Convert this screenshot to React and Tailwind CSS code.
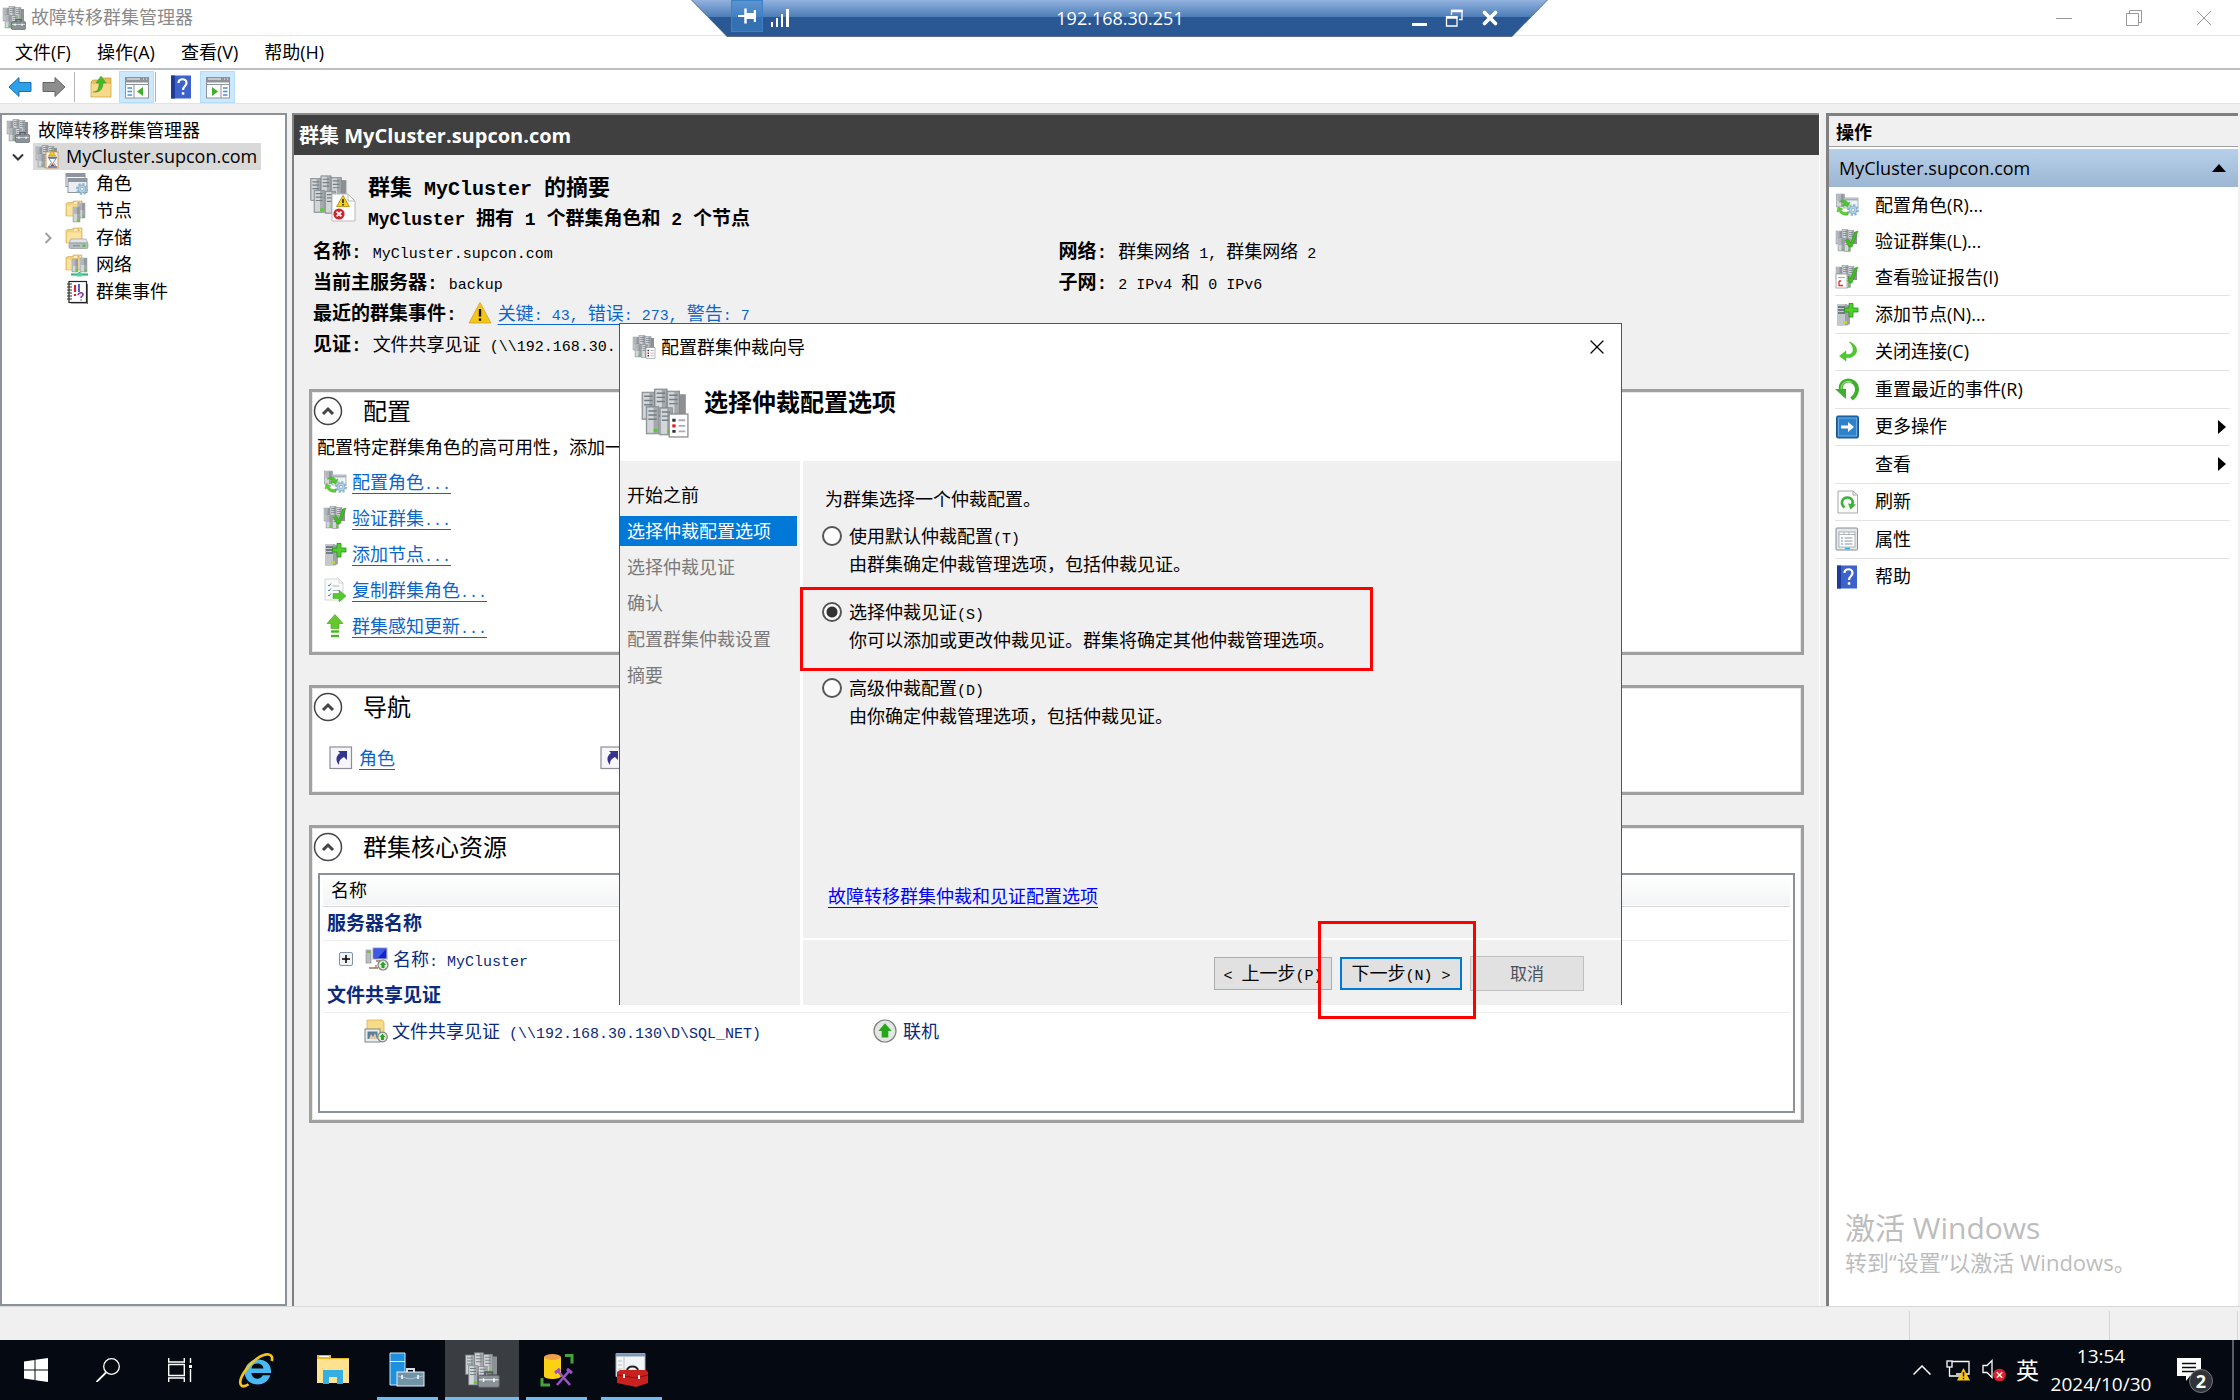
import { X } from "lucide-react";

const menus = ["文件(F)", "操作(A)", "查看(V)", "帮助(H)"];

const treeItems = [
    { label: "角色", icon: RolesIcon },
    { label: "节点", icon: NodesIcon },
    { label: "存储", icon: StorageIcon, expandable: true },
    { label: "网络", icon: NetworksIcon },
    { label: "群集事件", icon: EventsIcon },
];

const configLinks = [
    { label: "配置角色...", icon: ConfigureRoleIcon },
    { label: "验证群集...", icon: ValidateIcon },
    { label: "添加节点...", icon: AddNodeIcon },
    { label: "复制群集角色...", icon: CopyRoleIcon },
    { label: "群集感知更新...", icon: UpdateIcon },
];

const topActions = [
    { label: "配置角色(R)...", icon: ConfigureRoleIcon },
    { label: "验证群集(L)...", icon: ValidateIcon },
    { label: "查看验证报告(I)", icon: ReportIcon },
];

const actions = [
    { label: "添加节点(N)...", icon: AddNodeIcon },
    { label: "关闭连接(C)", icon: DisconnectIcon },
    { label: "重置最近的事件(R)", icon: ResetIcon },
    { label: "更多操作", icon: MoreIcon, submenu: true },
    { label: "查看", submenu: true },
    { label: "刷新", icon: RefreshIcon },
    { label: "属性", icon: PropertiesIcon },
    { label: "帮助", icon: HelpIcon },
];

const steps = ["开始之前", "选择仲裁配置选项", "选择仲裁见证", "确认", "配置群集仲裁设置", "摘要"];

const options = [
    {
        id: "default",
        label: "使用默认仲裁配置(T)",
        text: "由群集确定仲裁管理选项，包括仲裁见证。",
    },
    {
        id: "witness",
        label: "选择仲裁见证(S)",
        text: "你可以添加或更改仲裁见证。群集将确定其他仲裁管理选项。",
    },
    {
        id: "advanced",
        label: "高级仲裁配置(D)",
        text: "由你确定仲裁管理选项，包括仲裁见证。",
    },
];

/* ---------- text ---------- */

// Console style text: Latin runs are half as wide as the Chinese characters
function Song({ children, latin = "text-[15px]" }) {
    const parts = children.split(/([\x20-\x7e]+)/);
    return (
        <span className="whitespace-pre">
            {parts.map((part, i) =>
                i % 2 ? (
                    <span key={i} className={`font-['Liberation_Mono',monospace] leading-none ${latin}`}>
                        {part}
                    </span>
                ) : (
                    part
                )
            )}
        </span>
    );
}

/* ---------- icons ---------- */

function Icon({ className = "w-6 h-6", children }) {
    return (
        <svg viewBox="0 0 24 24" className={`shrink-0 ${className}`} fill="none" aria-hidden="true">
            {children}
        </svg>
    );
}

function Tower({ x, y, w = 6, h = 13 }) {
    return (
        <g>
            <rect x={x} y={y} width={w} height={h} fill="#a3a8ac" stroke="#7e8488" strokeWidth="0.4" />
            <rect x={x + 0.5} y={y + 0.5} width={w / 2} height={h - 1} fill="#d2d6d9" />
            <path
                d={`M${x + 1} ${y + 2}h${w - 2}M${x + 1} ${y + 4}h${w - 2}M${x + 1} ${y + 6}h${w - 2}`}
                stroke="#737d84"
                strokeWidth="0.7"
            />
            <rect x={x + w - 2.4} y={y + h - 2.4} width="1.8" height="1.6" fill="#4fd321" />
        </g>
    );
}

function Towers() {
    return (
        <g>
            <rect x="16" y="3" width="6" height="12" fill="#8d9194" />
            <Tower x={1} y={2} />
            <Tower x={7} y={0.5} />
            <Tower x={13} y={1.5} />
            <Tower x={3} y={9} />
            <Tower x={9.5} y={9.5} />
        </g>
    );
}

function Toolbox({ body = "#8b9297", dark = "#565d62" }) {
    return (
        <g>
            <path d="M14 16v-2.500h5V16" stroke={dark} strokeWidth="1.2" />
            <rect x="9.500" y="15.500" width="14" height="8" rx="1" fill={body} stroke={dark} strokeWidth="0.6" />
            <path d="M10 18.500h13" stroke="#dfe4e7" strokeWidth="0.8" />
            <path d="M13 17.500v2.500M20 17.500v2.500" stroke="#fff" strokeWidth="1" />
        </g>
    );
}

function ManagerIcon({ className }) {
    return (
        <Icon className={className}>
            <Towers />
            <Toolbox />
        </Icon>
    );
}

function WizardIcon({ className }) {
    return (
        <Icon className={className}>
            <Towers />
            <rect x="14" y="12.500" width="9" height="11" fill="#fff" stroke="#8a8a8a" strokeWidth="0.6" />
            <path d="M15.500 15.500h1.600M15.500 20.800h1.600" stroke="#333" strokeWidth="1.4" />
            <path d="M15.500 18.200h1.600" stroke="#e02020" strokeWidth="1.5" />
            <path d="M18.500 15.500h3.200M18.500 18.200h3.200M18.500 20.800h3.200" stroke="#aab" strokeWidth="0.9" />
        </Icon>
    );
}

function ClusterIcon() {
    return (
        <Icon className="w-6 h-7">
            <Towers />
            <rect x="11" y="7" width="12" height="16" fill="#fbf8f3" stroke="#d08a4a" strokeWidth="0.8" />
            <path d="M17 5l3.500 6h-7z" fill="#f7c81c" stroke="#9b7600" strokeWidth="0.5" />
            <path d="M13 12.500h9M13 22h9" stroke="#b5651d" strokeWidth="1.3" />
            <path d="M14 13.500h7l-2.500 4 2.500 4h-7l2.500-4z" fill="#fff" stroke="#4a78b8" strokeWidth="0.8" />
            <path d="M15.500 21l2-3 2 3z" fill="#d9302c" />
        </Icon>
    );
}

function SummaryIcon() {
    return (
        <Icon className="w-12 h-12 mt-1">
            <g transform="scale(0.85)">
                <Towers />
            </g>
            <path d="M11.500 9.500h8l3.500 3.500v10h-11.500z" fill="#fff" stroke="#b9b9b9" strokeWidth="0.5" />
            <path d="M19.500 9.500v3.500h3.500" stroke="#b9b9b9" strokeWidth="0.5" />
            <path d="M17 10.200l3.200 5.600h-6.400z" fill="#f5cf14" stroke="#a58300" strokeWidth="0.4" />
            <path d="M17 12v2M17 14.500v0.700" stroke="#222" strokeWidth="0.8" />
            <circle cx="15" cy="19.500" r="2.800" fill="#d1232a" />
            <path d="M13.800 18.300l2.400 2.400M16.200 18.300l-2.400 2.400" stroke="#fff" strokeWidth="0.9" />
        </Icon>
    );
}

function Folder() {
    return (
        <g>
            <path d="M1 4.500l2-1h5V2h9v15H1z" fill="#f3d27a" stroke="#d0a546" strokeWidth="0.6" />
            <path d="M9 4h7" stroke="#fff" strokeWidth="1.2" />
            <path d="M12.500 4h2" stroke="#e08a2c" strokeWidth="1.200" />
            <path d="M2 6.500h14v10H2z" fill="#f9e3a0" />
        </g>
    );
}

function Gear({ cx = 17, cy = 16 }) {
    return (
        <g>
            <circle cx={cx} cy={cy} r="4.800" stroke="#8fb6d3" strokeWidth="2.400" strokeDasharray="2.200 1.500" />
            <circle cx={cx} cy={cy} r="4" fill="#b7d0e2" stroke="#6f9cbd" strokeWidth="0.6" />
            <circle cx={cx} cy={cy} r="1.600" fill="#f4f9fc" stroke="#6f9cbd" strokeWidth="0.6" />
        </g>
    );
}

function RolesIcon() {
    return (
        <Icon>
            <rect x="1" y="1.500" width="19" height="13" fill="#f3f5f7" stroke="#8e979f" />
            <path d="M1 3.500h19" stroke="#8e979f" strokeWidth="3" />
            <rect x="3" y="6.500" width="19" height="14" fill="#e9eef2" stroke="#8e979f" />
            <path d="M3 8.500h19" stroke="#8e979f" strokeWidth="3" />
            <Gear cx={17} cy={17} />
        </Icon>
    );
}

function NodesIcon() {
    return (
        <Icon>
            <Folder />
            <Tower x={13} y={4} w={7} h={15} />
            <Tower x={8} y={8} w={7} h={15} />
        </Icon>
    );
}

function StorageIcon() {
    return (
        <Icon>
            <Folder />
            <path d="M6 13h15l2 4H4z" fill="#e2e5e7" stroke="#8f9497" strokeWidth="0.6" />
            <rect x="4" y="17" width="19" height="5.500" rx="1.500" fill="#b8bdc0" stroke="#858b8f" strokeWidth="0.6" />
            <path d="M8 19.800h7" stroke="#7d8488" strokeWidth="1" />
            <rect x="17.500" y="18.600" width="3" height="2.200" fill="#3ec928" />
        </Icon>
    );
}

function NetworksIcon() {
    return (
        <Icon>
            <Folder />
            <Tower x={7} y={6} w={6} h={13} />
            <Tower x={15} y={5} w={7} h={14} />
            <path d="M6 21.500h17M14.500 19v3" stroke="#2fae7a" strokeWidth="2" />
            <rect x="12" y="20" width="5" height="3.500" fill="#4fd79b" />
        </Icon>
    );
}

function EventsIcon() {
    return (
        <Icon>
            <rect x="4" y="1.500" width="17.500" height="21" fill="#fff" stroke="#222" strokeWidth="1.200" />
            <path d="M22.500 4v20H6" stroke="#444" strokeWidth="0.8" />
            <path d="M2 4h5M2 7h5M2 10h5M2 13h5M2 16h5M2 19h5" stroke="#333" strokeWidth="1" />
            <path d="M10 5v7M10 14v2" stroke="#e0201c" strokeWidth="2.200" />
            <path d="M14 4v8" stroke="#2b35c8" strokeWidth="1.600" />
            <path d="M13 15c1-3 5-3 5 0-1 2-2 1-2 3M16 19.500v1" stroke="#8a2fa8" strokeWidth="1.600" />
        </Icon>
    );
}

function ConfigureRoleIcon() {
    return (
        <Icon>
            <Tower x={1.5} y={1} w={8} h={13} />
            <rect x="9" y="5" width="14" height="10" fill="#eef2f5" stroke="#9aa3aa" strokeWidth="0.8" />
            <path d="M9 6.500h14" stroke="#a9b1b8" strokeWidth="2" />
            <Gear cx={18} cy={17} />
            <path d="M4 9c4-3 8-2 9 1l2-1-2 5-5-2 2-1c-1-2-4-2-6-2z" fill="#4dc62b" stroke="#2d9a14" strokeWidth="0.4" />
            <path d="M13 22c-4 1-8-1-9-4l-2 1 1-5 5 2-2 1c1 2 4 3 7 2z" fill="#5bd034" stroke="#2d9a14" strokeWidth="0.4" />
        </Icon>
    );
}

function ValidateIcon() {
    return (
        <Icon>
            <Towers />
            <path d="M10 11l3-1 2.500 4L20 3l3-1-6 16h-3z" fill="#3fc01f" stroke="#2a8f12" strokeWidth="0.5" />
        </Icon>
    );
}

function ReportIcon() {
    return (
        <Icon>
            <Towers />
            <path d="M13 11l2 3L20 3l3-1-6 16h-3z" fill="#3fc01f" stroke="#2a8f12" strokeWidth="0.5" />
            <rect x="1" y="9" width="11" height="14" fill="#fff" stroke="#999" strokeWidth="0.8" />
            <path d="M3 12.500h7" stroke="#aaa" />
            <path d="M4 16v4.500h4M4 16h2" stroke="#d9302c" strokeWidth="1.300" />
        </Icon>
    );
}

function AddNodeIcon() {
    return (
        <Icon>
            <path d="M2 2h9l4 2v18l-3 1.500H2z" fill="#9da3a7" />
            <path d="M2 2h8v21H2z" fill="#c3c8cb" />
            <path d="M3 5h7M3 8h7M3 11h7" stroke="#59636a" strokeWidth="1.300" />
            <rect x="8" y="19" width="4" height="2.500" fill="#b7e02a" />
            <path d="M14 1.500h4v4.500h5v4h-5v5h-4v-5H9.500V6H14z" fill="#4fcf2c" stroke="#249010" strokeWidth="0.8" />
        </Icon>
    );
}

function CopyRoleIcon() {
    return (
        <Icon>
            <path d="M2 1h14l4 4v17H2z" fill="#fafafa" stroke="#c4c9cd" strokeWidth="0.8" />
            <path d="M16 1v4h4" stroke="#c4c9cd" strokeWidth="0.8" />
            <path d="M5 7l1 1 2-2.500M5 12l1 1 2-2.500M5 17l1 1 2-2.500" stroke="#3a86c8" strokeWidth="1" />
            <path d="M9.500 8h7M9.500 12.500h7" stroke="#b0b5ba" strokeWidth="1" />
            <path d="M10 15.500h6v-3.500l7 6-7 6v-3.500h-6z" fill="#55c92f" stroke="#37a318" strokeWidth="0.5" />
        </Icon>
    );
}

function UpdateIcon() {
    return (
        <Icon>
            <path d="M12 0.500l8 9h-4v5H8v-5H4z" fill="#63c92f" stroke="#3f9c17" strokeWidth="0.6" />
            <path d="M8 17.500h8" stroke="#4fb422" strokeWidth="2.400" />
            <path d="M8 22h8" stroke="#4fb422" strokeWidth="2.400" />
        </Icon>
    );
}

function DisconnectIcon() {
    return (
        <Icon>
            <path d="M14 2c9 2 11 13 1 15.500h-4V21l-6.500-5 6.500-5v3.500h3c6-1 5-9 0-12.500z" fill="#4ccb2b" stroke="#2a9d12" strokeWidth="0.4" />
        </Icon>
    );
}

function ResetIcon() {
    return (
        <Icon>
            <path d="M6.500 14C3.500 6 12 1 18 5s5 12-1.500 17" stroke="#3fae2b" strokeWidth="4" />
            <path d="M6.500 13C5 6.500 12 2.500 17 5.500" stroke="#8be06a" strokeWidth="1.200" />
            <path d="M0 12l11 0 0 10z" fill="#3fae2b" />
        </Icon>
    );
}

function MoreIcon() {
    return (
        <Icon>
            <rect x="1.500" y="1" width="22" height="22" rx="1.500" fill="#1f6db5" stroke="#14568f" />
            <rect x="3.500" y="3" width="18" height="18" fill="#2c83cb" stroke="#7fb9e6" strokeWidth="0.8" />
            <path d="M6 10.500h7V7l6 5-6 5v-3.500H6z" fill="#fff" />
        </Icon>
    );
}

function RefreshIcon() {
    return (
        <Icon>
            <path d="M3 1h15l4.500 4v18H3z" fill="#fbfbfb" stroke="#a8a8a8" />
            <path d="M18 1v4h4.500" stroke="#a8a8a8" />
            <path d="M9.500 17.500C5 14 7 7.500 12.500 7.500c4 0 6.500 4 4.500 7.500" stroke="#3db23a" strokeWidth="2.600" />
            <path d="M13 13.500l8 1-5.500 5z" fill="#3db23a" />
        </Icon>
    );
}

function PropertiesIcon() {
    return (
        <Icon>
            <rect x="1" y="1" width="21.500" height="22" rx="1" fill="#e5e8eb" stroke="#858c92" />
            <rect x="4" y="5" width="16" height="15" fill="#fff" stroke="#9aa2a8" strokeWidth="0.8" />
            <path d="M4 7.500h16M9 5v2.500M14 5v2.500" stroke="#9aa2a8" strokeWidth="0.8" />
            <path d="M9.500 11h8M9.500 14h8M9.500 17h8" stroke="#8c949b" />
            <path d="M6 11h2M6 14h2M6 17h2" stroke="#3c98d9" />
            <path d="M10 21.500h5" stroke="#2bb4e8" strokeWidth="1.600" />
        </Icon>
    );
}

function HelpIcon() {
    return (
        <Icon>
            <rect x="2" y="0.500" width="20" height="23" fill="#3d62c9" />
            <rect x="2" y="0.500" width="4" height="23" fill="#1f3b9a" />
            <path d="M9.500 8c0-5 8-5 8 0 0 3-3.500 3.500-3.500 7" stroke="#fff" strokeWidth="2.200" />
            <rect x="12.800" y="17.200" width="2.500" height="2.500" fill="#fff" />
        </Icon>
    );
}

function ArrowIcon({ fill, stroke, flip }) {
    return (
        <Icon>
            <path
                d="M1 12L11 2.500v5h12v9H11v5z"
                fill={fill}
                stroke={stroke}
                transform={flip ? "translate(24 0) scale(-1 1)" : undefined}
            />
        </Icon>
    );
}

function UpFolderIcon() {
    return (
        <Icon>
            <path d="M2 7l2-2h9V3h9v19H2z" fill="#e9bf5c" stroke="#c59a36" strokeWidth="0.7" />
            <path d="M2.500 9h19v12.500h-19z" fill="#f6d98b" />
            <path d="M4 17c5 0 6-4 6-9H7l5-7 5 7h-3c0 6-3 10-10 9z" fill="#46b82a" stroke="#2d8f16" strokeWidth="0.4" />
        </Icon>
    );
}

function PaneIcon({ right }) {
    return (
        <Icon className="w-[26px] h-6">
            <rect x="0.500" y="2.500" width="23" height="20.500" fill="#fdfdfd" stroke="#8d9399" />
            <rect x="0.500" y="2.500" width="23" height="5" fill="#8d9399" />
            <path d="M2 4h13M18 4h1M21 4h1" stroke="#fff" />
            <path d="M1 9.500h22" stroke="#8d9399" />
            {right ? (
                <g>
                    <path d="M15 9v14" stroke="#8d9399" />
                    <path d="M17 13h4.500M17 16.500h4.500M17 20h4.500" stroke="#4a8ed6" strokeWidth="1.400" />
                    <path d="M6 12l6 4.500-6 4.500z" fill="#3fae2b" />
                </g>
            ) : (
                <g>
                    <path d="M9 9v14" stroke="#8d9399" />
                    <path d="M2.500 13H7M2.500 16.500H7M2.500 20H7" stroke="#4a8ed6" strokeWidth="1.400" />
                    <path d="M18 12l-6 4.500 6 4.500z" fill="#3fae2b" />
                </g>
            )}
        </Icon>
    );
}

function WarningIcon() {
    return (
        <Icon>
            <path d="M12 1.500l11 20.500H1z" fill="#f5c518" stroke="#c9a227" strokeWidth="0.8" />
            <path d="M12 8v7.500M12 17.500v2.200" stroke="#111" strokeWidth="2.400" />
        </Icon>
    );
}

function ShortcutIcon() {
    return (
        <Icon>
            <rect x="1" y="1" width="21.500" height="21.500" fill="#f6f6fb" stroke="#8e8e99" strokeWidth="1.200" />
            <path d="M9 5h9v9l-3-3c-4 2-5 4-5 8-4-5-3-9 1-12z" fill="#35358e" />
        </Icon>
    );
}

function OnlineBadge({ cx, cy, r }) {
    return (
        <g>
            <circle cx={cx} cy={cy} r={r} fill="#e3e6e3" stroke="#7d827d" strokeWidth="1.200" />
            <path d={`M${cx} ${cy - r * 0.7}l${r * 0.6} ${r * 0.7}h-${r * 0.3}v${r * 0.6}h-${r * 0.6}v-${r * 0.6}h-${r * 0.3}z`} fill="#27a51c" />
        </g>
    );
}

function ComputerIcon() {
    return (
        <Icon>
            <rect x="1" y="3" width="5" height="13" fill="#b9bec1" stroke="#82888c" strokeWidth="0.6" />
            <rect x="2" y="4" width="3" height="2" fill="#4fd321" />
            <rect x="8" y="1" width="14" height="11" fill="#1323c6" stroke="#b4bac0" strokeWidth="1.200" />
            <path d="M8.500 1.500h13l-9 10h-4z" fill="#3e59e8" />
            <path d="M11 14h8M4 21h9M11 18v3" stroke="#9c7a5c" strokeWidth="1.300" />
            <OnlineBadge cx={18} cy={18} r={5} />
        </Icon>
    );
}

function ShareIcon() {
    return (
        <Icon className="w-[26px] h-6">
            <path d="M3 1h15l2 2v12H3z" fill="#f6dc86" stroke="#d1a949" strokeWidth="0.7" />
            <rect x="1" y="10" width="15" height="13" fill="#e9edf0" stroke="#7d858b" />
            <rect x="3.500" y="12.500" width="10" height="7.500" fill="#5a7f9a" />
            <path d="M5 20l2-5 2 3 2-4 2 6z" fill="#dfc9a8" />
            <OnlineBadge cx={18.5} cy={18} r={4.8} />
        </Icon>
    );
}

/* ---------- window chrome ---------- */

function RemoteBar() {
    return (
        <div className="absolute top-0 left-[691px] w-[857px] h-[37px] bg-[#5c6f8a] [clip-path:polygon(0_0,100%_0,calc(100%-36px)_100%,36px_100%)]">
            <div className="h-9 flex items-center pl-10 pr-[47px] text-white bg-linear-to-b from-[#92b2de] from-0% via-[#4c7db8] via-47% to-[#295894] to-48% [clip-path:polygon(1px_0,calc(100%-1px)_0,calc(100%-36px)_100%,36px_100%)]">
                <button className="w-8 h-8 mb-1 flex items-center justify-center bg-[#3c82c8]/60 border border-[#3c82c8]" aria-label="固定">
                    <svg viewBox="0 0 18 16" className="w-[18px] h-4" stroke="#fff" fill="none" aria-hidden="true">
                        <path d="M0 8h7" strokeWidth="2" />
                        <path d="M7.500 0.500v15M17 2v12" strokeWidth="2.500" />
                        <path d="M8 8h9" strokeWidth="6" />
                    </svg>
                </button>
                <svg viewBox="0 0 18 18" className="w-[18px] h-[18px] ml-2" fill="#fff" aria-hidden="true">
                    <path d="M0 13h2v5H0zM5 9h2v9H5zM10 5h2v13h-2zM15 0h3v18h-3z" />
                </svg>
                <span className="flex-1 text-center text-[18px] pl-10">192.168.30.251</span>
                <div className="flex items-center gap-4">
                    <button aria-label="最小化">
                        <svg viewBox="0 0 18 18" className="w-[18px] h-[18px]" aria-hidden="true">
                            <path d="M1 15.500h15" stroke="#fff" strokeWidth="3" />
                        </svg>
                    </button>
                    <button aria-label="还原">
                        <svg viewBox="0 0 18 18" className="w-[18px] h-[18px]" fill="none" stroke="#fff" aria-hidden="true">
                            <path d="M6.500 6V1.500h10.500v9h-3" strokeWidth="1.300" />
                            <path d="M6 2h11.500M1 8.500h11.500" strokeWidth="2.500" />
                            <path d="M1.500 8h10.500v9H1.500z" strokeWidth="1.300" />
                        </svg>
                    </button>
                    <button aria-label="关闭">
                        <X className="w-[22px] h-[22px]" strokeWidth={4} />
                    </button>
                </div>
            </div>
        </div>
    );
}

function TitleBar() {
    return (
        <header className="h-9 shrink-0 flex items-center border-b border-[#e5e5e5] bg-white pl-[2px]">
            <ManagerIcon className="w-6 h-6" />
            <h1 className="ml-[5px] text-[18px] text-[#8a8a8a]">故障转移群集管理器</h1>
            <div className="ml-auto mr-[26px] flex items-center gap-[50px] text-[#999]">
                <button aria-label="最小化" className="w-5 h-5">
                    <svg viewBox="0 0 20 20" stroke="currentColor" aria-hidden="true"><path d="M2 10.500h16" /></svg>
                </button>
                <button aria-label="还原" className="w-5 h-5">
                    <svg viewBox="0 0 20 20" stroke="currentColor" fill="none" aria-hidden="true">
                        <path d="M2.500 5.500h12v12h-12zM5.500 5.500v-3h12v12h-3" />
                    </svg>
                </button>
                <button aria-label="关闭" className="w-5 h-5">
                    <svg viewBox="0 0 20 20" stroke="currentColor" aria-hidden="true"><path d="M3 3l14 14M17 3L3 17" /></svg>
                </button>
            </div>
        </header>
    );
}

function Toolbar() {
    return (
        <div className="h-[34px] shrink-0 flex items-center bg-white border-b border-[#e3e3e3] pl-2">
            <button aria-label="后退"><ArrowIcon fill="#2f9fe8" stroke="#1b6fb5" /></button>
            <button aria-label="前进" className="ml-[10px]"><ArrowIcon fill="#8d8d8d" stroke="#666" flip /></button>
            <span className="w-px h-[30px] bg-[#b5b5b5] ml-2" />
            <button aria-label="向上一级" className="ml-[14px]"><UpFolderIcon /></button>
            <button aria-label="显示控制台树" className="ml-[6px] w-[35px] h-8 flex items-center justify-center bg-[#cce8ff] border border-[#b5dcfa]">
                <PaneIcon />
            </button>
            <span className="w-px h-[30px] bg-[#b5b5b5] ml-px" />
            <button aria-label="帮助主题" className="ml-[13px]"><HelpIcon /></button>
            <button aria-label="显示操作窗格" className="ml-[7px] w-[35px] h-8 flex items-center justify-center bg-[#cce8ff] border border-[#b5dcfa]">
                <PaneIcon right />
            </button>
        </div>
    );
}

function Tree() {
    return (
        <nav className="w-[287px] shrink-0 bg-white border-2 border-[#8b929c] text-[18px]">
            <div className="h-7 pt-[3px] pl-1 flex items-center gap-2">
                <ManagerIcon className="w-6 h-6" />
                <span>故障转移群集管理器</span>
            </div>
            <div className="h-[27px] flex items-center pl-[10px]">
                <svg viewBox="0 0 12 12" className="w-3 h-3 mr-[9px]" fill="none" stroke="#333" strokeWidth="2" aria-hidden="true">
                    <path d="M1 3.500l5 5 5-5" />
                </svg>
                <a href="#cluster" className="h-[27px] pl-[2px] pr-1 flex items-center gap-[7px] bg-[#d9d9d9]">
                    <ClusterIcon />
                    <span className="text-[18px]">MyCluster.supcon.com</span>
                </a>
            </div>
            <ul>
                {treeItems.map(({ label, icon: ItemIcon, expandable }) => (
                    <li key={label} className="h-[27px] flex items-center pl-[38px]">
                        <span className="w-[25px] pl-[2px]">
                            {expandable && (
                                <svg viewBox="0 0 12 12" className="w-3 h-3" fill="none" stroke="#a0a0a0" strokeWidth="2" aria-hidden="true">
                                    <path d="M3.500 1l5 5-5 5" />
                                </svg>
                            )}
                        </span>
                        <a href="#node" className="flex items-center gap-[7px]">
                            <ItemIcon />
                            {label}
                        </a>
                    </li>
                ))}
            </ul>
        </nav>
    );
}

/* ---------- centre pane ---------- */

function Field({ label, children }) {
    return (
        <div className="h-[31px] flex items-center">
            <dt className="text-[19px] font-bold"><Song latin="text-[18px]">{`${label}: `}</Song></dt>
            <dd className="flex items-center gap-[6px]">{children}</dd>
        </div>
    );
}

function Panel({ title, className = "", children }) {
    return (
        <section className={`bg-white border-3 border-[#a0a0a0] outline-1 -outline-offset-4 outline-[#e8e8e8] ${className}`}>
            <div className="h-[38px] flex items-center pl-px">
                <button aria-label={`折叠${title}`}>
                    <svg viewBox="0 0 30 30" className="w-[30px] h-[30px]" fill="none" stroke="#444" aria-hidden="true">
                        <circle cx="15" cy="15" r="13.500" strokeWidth="1.500" />
                        <path d="M10 18l5-5 5 5" strokeWidth="3" />
                    </svg>
                </button>
                <h3 className="ml-5 text-[24px]">{title}</h3>
            </div>
            {children}
        </section>
    );
}

function CoreResources() {
    return (
        <div className="mt-[7px] mx-[6px] mb-[7px] h-[240px] border-2 border-[#8b929c] px-[3px] overflow-hidden">
            <table className="w-full table-fixed text-left text-[#0b2a7a] border-collapse">
                <thead>
                    <tr className="h-[31px] text-black bg-linear-to-b from-white to-[#f3f4f6] border-b border-[#d5d5d5]">
                        <th className="w-[550px] pl-2 font-normal">名称</th>
                        <th />
                    </tr>
                </thead>
                <tbody>
                    <tr className="h-[34px] border-b border-[#ececec]">
                        <th colSpan={2} className="pl-1 text-[19px] font-bold">服务器名称</th>
                    </tr>
                    <tr className="h-[38px]">
                        <td colSpan={2} className="pl-4">
                            <div className="flex items-center">
                                <button aria-label="展开" className="w-[14px] h-[14px] flex items-center justify-center border border-[#7f93aa] rounded-xs bg-[#f0f3f6]">
                                    <svg viewBox="0 0 10 10" className="w-[10px] h-[10px]" stroke="#000" strokeWidth="1.500" aria-hidden="true">
                                        <path d="M1 5h8M5 1v8" />
                                    </svg>
                                </button>
                                <span className="ml-3 mr-1"><ComputerIcon /></span>
                                <Song>名称: MyCluster</Song>
                            </div>
                        </td>
                    </tr>
                    <tr className="h-[34px] border-b border-[#ececec]">
                        <th colSpan={2} className="pl-1 text-[19px] font-bold">文件共享见证</th>
                    </tr>
                    <tr className="h-[38px]">
                        <td className="pl-10">
                            <div className="flex items-center gap-[3px]">
                                <ShareIcon />
                                <Song>{"文件共享见证 (\\\\192.168.30.130\\D\\SQL_NET)"}</Song>
                            </div>
                        </td>
                        <td>
                            <div className="flex items-center gap-[6px]">
                                <Icon><OnlineBadge cx={12} cy={12} r={11} /></Icon>
                                联机
                            </div>
                        </td>
                    </tr>
                </tbody>
            </table>
        </div>
    );
}

function ClusterPane() {
    return (
        <main className="flex-1 min-w-0 overflow-hidden border-t-2 border-l-2 border-t-[#8a8a8a] border-l-[#808080] text-[18px] leading-6">
            <h2 className="h-10 flex items-center pt-px pl-[5px] bg-[#404040] text-white text-[20px] font-bold">
                群集 MyCluster.supcon.com
            </h2>
            <div className="px-[15px] pt-4">
                <div className="flex gap-[11px]">
                    <SummaryIcon />
                    <div className="font-bold">
                        <div className="h-[31px] flex items-center text-[22px]">
                            <Song latin="text-[20px]">群集 MyCluster 的摘要</Song>
                        </div>
                        <div className="h-8 flex items-center text-[19px]">
                            <Song latin="text-[18px]">MyCluster 拥有 1 个群集角色和 2 个节点</Song>
                        </div>
                    </div>
                </div>
                <div className="grid grid-cols-2 pl-1 pt-px">
                    <dl>
                        <Field label="名称"><Song>MyCluster.supcon.com</Song></Field>
                        <Field label="当前主服务器"><Song>backup</Song></Field>
                        <Field label="最近的群集事件">
                            <WarningIcon />
                            <a href="#events" className="text-[#0a66cc] underline underline-offset-4">
                                <Song>关键: 43, 错误: 273, 警告: 7</Song>
                            </a>
                        </Field>
                        <Field label="见证">
                            <Song>{"文件共享见证 (\\\\192.168.30."}</Song>
                        </Field>
                    </dl>
                    <dl>
                        <Field label="网络"><Song>群集网络 1, 群集网络 2</Song></Field>
                        <Field label="子网"><Song>2 IPv4 和 0 IPv6</Song></Field>
                    </dl>
                </div>

                <Panel title="配置" className="mt-[30px] pb-2">
                    <p className="h-[34px] flex items-center pl-[5px] whitespace-nowrap">
                        配置特定群集角色的高可用性，添加一
                    </p>
                    <ul className="pl-[11px]">
                        {configLinks.map(({ label, icon: LinkIcon }) => (
                            <li key={label} className="h-9 flex items-center gap-[5px]">
                                <LinkIcon />
                                <a href="#configure" className="text-[#0a66cc] underline underline-offset-4">
                                    <Song>{label}</Song>
                                </a>
                            </li>
                        ))}
                    </ul>
                </Panel>

                <Panel title="导航" className="mt-[30px] pb-4">
                    <div className="h-[50px] pt-[14px] flex items-center pl-[17px]">
                        <div className="w-[271px] flex items-center gap-[6px]">
                            <ShortcutIcon />
                            <a href="#roles" className="text-[#0a66cc] underline underline-offset-4">角色</a>
                        </div>
                        <a href="#nodes" aria-label="节点"><ShortcutIcon /></a>
                    </div>
                </Panel>

                <Panel title="群集核心资源" className="mt-[30px]">
                    <CoreResources />
                </Panel>
            </div>
        </main>
    );
}

/* ---------- actions pane ---------- */

function ActionRow({ item, className }) {
    const ItemIcon = item.icon;
    return (
        <li className={`flex items-center ${className}`}>
            <button className="flex-1 flex items-center text-left">
                <span className="w-10 shrink-0">{ItemIcon && <ItemIcon />}</span>
                {item.label}
                {item.submenu && (
                    <svg viewBox="0 0 8 14" className="w-2 h-[14px] ml-auto mr-1" aria-hidden="true">
                        <path d="M0 0l8 7-8 7z" />
                    </svg>
                )}
            </button>
        </li>
    );
}

function ActionsPane() {
    return (
        <aside className="w-[412px] shrink-0 mr-[2px] flex flex-col bg-white border-l-3 border-t-3 border-[#808080] text-[18px]">
            <h2 className="h-[31px] shrink-0 flex items-center pt-[2px] pl-[7px] bg-[#f0f0f0] border-b border-[#a0a0a0] font-bold">操作</h2>
            <div className="mt-[2px] h-[38px] shrink-0 flex items-center justify-between pl-[10px] pr-3 bg-linear-to-b from-[#b7d0ea] to-[#9cb6d3]">
                <span className="text-[18px]">MyCluster.supcon.com</span>
                <svg viewBox="0 0 14 8" className="w-[14px] h-2" aria-hidden="true"><path d="M0 8l7-8 7 8z" /></svg>
            </div>
            <ul className="pl-[6px] pr-2">
                {topActions.map((item) => (
                    <ActionRow key={item.label} item={item} className="h-9" />
                ))}
            </ul>
            <ul className="ml-[6px] mr-2 h-[300px] shrink-0 grid auto-rows-fr">
                {actions.map((item) => (
                    <ActionRow key={item.label} item={item} className="border-t border-[#e3e3e3]" />
                ))}
            </ul>
            <div className="mt-auto mb-7 pl-4 text-[#bdbdbd]">
                <div className="text-[30px] leading-9">激活 Windows</div>
                <div className="text-[22px] leading-8">转到“设置”以激活 Windows。</div>
            </div>
        </aside>
    );
}

/* ---------- wizard ---------- */

function QuorumOption({ option, checked }) {
    return (
        <div className="h-[76px]">
            <label className="h-7 flex items-center gap-[7px]">
                <input
                    type="radio"
                    name="quorum"
                    defaultChecked={checked}
                    className="appearance-none w-5 h-5 rounded-full border-2 border-[#555] bg-white checked:bg-[radial-gradient(circle,#333_0_5px,#fff_6px)]"
                />
                <Song>{option.label}</Song>
            </label>
            <p className="h-7 flex items-center pl-[27px] whitespace-nowrap">{option.text}</p>
        </div>
    );
}

function QuorumWizard() {
    return (
        <div
            role="dialog"
            aria-labelledby="wizard-title"
            className="absolute left-[619px] top-[323px] w-[1003px] h-[682px] flex flex-col bg-white border border-b-0 border-[#555] text-[18px] leading-6"
        >
            <div className="h-[46px] shrink-0 flex items-center pl-3 pr-3">
                <WizardIcon className="w-6 h-6" />
                <span id="wizard-title" className="ml-[5px]">配置群集仲裁向导</span>
                <button aria-label="关闭" className="ml-auto"><X className="w-6 h-6" strokeWidth={1.2} /></button>
            </div>
            <div className="h-[91px] shrink-0 flex pl-5 pt-4">
                <WizardIcon className="w-[50px] h-[50px] mt-[2px]" />
                <h2 className="ml-[14px] text-[24px] leading-8 font-bold">选择仲裁配置选项</h2>
            </div>
            <div className="flex-1 flex bg-[#f0f0f0]">
                <ol className="w-[180px] shrink-0 pt-4 text-[#7a7a7a]">
                    {steps.map((step, i) => (
                        <li key={step} className="h-9 flex items-center">
                            <span
                                className={
                                    i === 1
                                        ? "w-[177px] pl-[7px] leading-[30px] bg-[#0078d7] text-white"
                                        : i === 0
                                          ? "pl-[7px] text-black"
                                          : "pl-[7px]"
                                }
                            >
                                {step}
                            </span>
                        </li>
                    ))}
                </ol>
                <div className="flex-1 flex flex-col border-l-3 border-white">
                    <form className="relative flex-1 pl-[19px] pt-6">
                        <p className="h-7 flex items-center pl-[3px]">为群集选择一个仲裁配置。</p>
                        <div className="pt-[9px]">
                            {options.map((option) => (
                                <QuorumOption key={option.id} option={option} checked={option.id === "witness"} />
                            ))}
                        </div>
                        <a href="#quorum-help" className="inline-block mt-[134px] ml-[6px] text-[#0000ff] underline underline-offset-4">
                            故障转移群集仲裁和见证配置选项
                        </a>
                        <div className="absolute -left-[3px] top-[126px] w-[573px] h-[84px] border-3 border-[#ff0000] pointer-events-none" />
                    </form>
                    <div className="relative h-[67px] shrink-0 flex items-center justify-end gap-2 pr-[37px] pt-px border-t-2 border-white">
                        <button className="w-[118px] h-[33px] bg-[#e1e1e1] border border-[#adadad] whitespace-nowrap">
                            <Song>{"< 上一步(P)"}</Song>
                        </button>
                        <button className="w-[122px] h-[33px] bg-[#e1e1e1] border-2 border-[#0078d7] whitespace-nowrap">
                            <Song>{"下一步(N) >"}</Song>
                        </button>
                        <button className="w-[114px] h-[35px] pt-px bg-[#e1e1e1] border border-[#c0c0c0] text-[17px] text-[#4a4f5c]">
                            取消
                        </button>
                        <div className="absolute right-[145px] -top-[19px] w-[158px] h-[98px] border-3 border-[#ff0000] pointer-events-none" />
                    </div>
                </div>
            </div>
        </div>
    );
}

/* ---------- taskbar ---------- */

function Task({ label, className = "w-[75px]", bar, children }) {
    return (
        <button aria-label={label} className={`relative h-full flex items-center justify-center ${className}`}>
            {children}
            {bar && <span className={`absolute bottom-0 h-[3px] bg-[#76b9ed] ${bar}`} />}
        </button>
    );
}

function Taskbar() {
    return (
        <footer className="h-[60px] shrink-0 flex items-center bg-[#050a12] text-white">
            <Task label="开始" className="w-[72px]">
                <Icon>
                    <path d="M0 3.500l10.500-1.500v9.500H0zM11.500 1.800L24 0v11.500H11.500zM0 12.500h10.500V22L0 20.500zM11.500 12.500H24V24l-12.500-1.800z" fill="#fff" />
                </Icon>
            </Task>
            <Task label="搜索" className="w-[72px]">
                <Icon>
                    <circle cx="15.500" cy="8.500" r="7.800" stroke="#fff" strokeWidth="1.300" />
                    <path d="M10 14.500L0.500 24" stroke="#fff" strokeWidth="1.800" />
                </Icon>
            </Task>
            <Task label="任务视图" className="w-[72px]">
                <Icon>
                    <path d="M0.700 0v4h15.600V0M0.700 24v-4h15.600v4M0.700 6.500h15.600v11H0.700zM22.500 0v5M22.500 11v13" stroke="#fff" strokeWidth="1.400" />
                    <rect x="21" y="7" width="3" height="3" fill="#fff" />
                </Icon>
            </Task>
            <Task label="Internet Explorer" className="w-[80px]">
                <Icon className="w-9 h-9">
                    <path d="M21.500 15.500h-5c-1.500 3.500-7.500 3-7.500-1.500H22C23 2 5 2 4.500 13.500c0 10 14.500 11 17 2zM9 11c0.500-4.500 7.500-4.500 8 0z" fill="#48b9f2" fillRule="evenodd" />
                    <path d="M22.500 6C24 1 19 0 12.500 4.500 5 10 0 19 2 22c1 1.500 3.500 0.500 5-0.500" stroke="#f6c21c" strokeWidth="1.800" />
                </Icon>
            </Task>
            <Task label="文件资源管理器" className="w-[73px]">
                <svg viewBox="0 0 32 30" className="w-8 h-[30px]" aria-hidden="true">
                    <path d="M0 0h14v3h18v25H0z" fill="#f0b429" />
                    <path d="M0 4h32v24H0z" fill="#ffe28f" />
                    <path d="M2 1.500h10" stroke="#fff" />
                    <path d="M6 29V15h20v14h-6v-7h-8v7z" fill="#35aee2" />
                </svg>
            </Task>
            <Task label="服务器管理器" bar="left-2 right-1.5">
                <svg viewBox="0 0 36 36" className="w-9 h-9" aria-hidden="true">
                    <path d="M1 1h15v32H1z" fill="#1e90de" stroke="#cfe8fa" />
                    <path d="M1 9.500h15" stroke="#fff" />
                    <path d="M18 20v-3h7v3" stroke="#d3dee6" strokeWidth="2" fill="none" />
                    <rect x="8" y="20" width="27" height="14" fill="#7292a6" stroke="#e6eef3" />
                    <path d="M9 24l12 3 13-3" stroke="#a9c0ce" fill="none" />
                    <path d="M13 23v4M29 23v4" stroke="#fff" strokeWidth="1.500" />
                </svg>
            </Task>
            <Task label="故障转移群集管理器" className="w-[74px] ml-px bg-[#3a3d42]" bar="inset-x-0">
                <ManagerIcon className="w-9 h-9" />
            </Task>
            <Task label="SQL Server Management Studio" bar="inset-x-[7px]">
                <svg viewBox="0 0 34 34" className="w-[34px] h-[34px]" fill="none" aria-hidden="true">
                    <path d="M4 4v19c0 4 17 4 17 0V4z" fill="#fbd116" />
                    <ellipse cx="12.500" cy="4" rx="8.500" ry="3" fill="#f0a04b" />
                    <path d="M25 2.500h7v8M2 25v7h8" stroke="#43a33f" strokeWidth="3" />
                    <path d="M17 17l13 15M30 17L17 32" stroke="#9a52c4" strokeWidth="2.500" />
                    <path d="M15 20l5-4M27 16l5 4" stroke="#9a52c4" strokeWidth="3" />
                </svg>
                <span className="absolute bottom-0 right-[7px] w-[13px] h-[3px] bg-[#4f7fa6]" />
            </Task>
            <Task label="配置管理器" bar="inset-x-[7px]">
                <svg viewBox="0 0 34 34" className="w-[34px] h-[34px]" fill="none" aria-hidden="true">
                    <path d="M1 0.500h29v23H1z" fill="#f2f4f6" stroke="#aab1b8" />
                    <path d="M1 2h29" stroke="#7f98b8" strokeWidth="3" />
                    <path d="M9 4v18M3 8h4M3 12h4M3 16h4" stroke="#b9c2ca" />
                    <path d="M12 18c0-6 11-6 11 0" stroke="#222" strokeWidth="2" />
                    <path d="M2 19l3-2h26l2 2v11l-12 4-19-4z" fill="#c9211e" />
                    <path d="M2 22l19 3 12-3" stroke="#8f1010" strokeWidth="1.200" />
                    <path d="M9 21v4M24 22v4" stroke="#eee" strokeWidth="2" />
                </svg>
            </Task>

            <div className="ml-auto flex items-center h-full">
                <button aria-label="显示隐藏的图标">
                    <svg viewBox="0 0 18 10" className="w-[18px] h-[10px]" fill="none" stroke="#fff" strokeWidth="1.500" aria-hidden="true">
                        <path d="M0.500 9.500L9 1l8.500 8.500" />
                    </svg>
                </button>
                <Icon className="w-6 h-6 ml-[15px]">
                    <path d="M6 3.500h17v12.500H10M3.500 9v9h11" stroke="#fff" strokeWidth="1.300" />
                    <rect x="1" y="3" width="5" height="6" stroke="#fff" strokeWidth="1.300" />
                    <path d="M17.500 10l6.500 12.500H11z" fill="#fbc618" />
                    <path d="M17.500 14v4.500M17.500 19.800v1.500" stroke="#222" strokeWidth="1.500" />
                </Icon>
                <Icon className="w-6 h-6 ml-3">
                    <path d="M1 7.500h4l5-5v17l-5-5H1z" stroke="#fff" strokeWidth="1.300" />
                    <circle cx="17.500" cy="17" r="6.300" fill="#e01f2c" />
                    <path d="M14.800 14.300l5.400 5.400M20.200 14.300l-5.400 5.400" stroke="#fff" strokeWidth="1.400" />
                </Icon>
                <span className="ml-[10px] text-[23px] leading-6">英</span>
                <div className="ml-[10px] w-[104px] flex flex-col items-center text-[19px] leading-7 whitespace-nowrap">
                    <div>13:54</div>
                    <div>2024/10/30</div>
                </div>
                <button aria-label="操作中心" className="relative ml-6 w-6 h-6">
                    <Icon>
                        <path d="M0 0h24v18H13l-4 5v-5H0z" fill="#fff" />
                        <path d="M5 5.500h14M5 9.500h14M5 13.500h14" stroke="#050a12" strokeWidth="1.300" />
                    </Icon>
                    <span className="absolute left-3 top-[11px] w-6 h-6 rounded-full border border-[#777] bg-[#303438] text-[18px] leading-[22px] font-bold">
                        2
                    </span>
                </button>
                <span className="ml-[31px] mr-[6px] w-[2px] h-full bg-[#5a5f66]" />
            </div>
        </footer>
    );
}

export default function App() {
    return (
        <div className="relative h-screen flex flex-col overflow-hidden bg-[#f0f0f0] text-black font-['Open_Sans','Noto_Sans_CJK_SC',sans-serif]">
            <TitleBar />
            <RemoteBar />
            <div className="h-[34px] shrink-0 flex items-center gap-[26px] pl-[15px] bg-white border-b-2 border-[#bcbfc4] text-[18px]">
                {menus.map((menu) => (
                    <button key={menu}>{menu}</button>
                ))}
            </div>
            <Toolbar />
            <div className="flex-1 min-h-0 flex pt-[9px] border-b border-[#d8d8d8]">
                <Tree />
                <div className="w-[5px] shrink-0" />
                <ClusterPane />
                <div className="w-[7px] shrink-0 border-l border-white" />
                <ActionsPane />
            </div>
            <div className="h-[33px] shrink-0 flex justify-end pt-1">
                <div className="w-[200px] border-l border-[#d5d5d5]" />
                <div className="w-[129px] mr-[2px] border-x border-[#d5d5d5]" />
            </div>
            <Taskbar />
            <QuorumWizard />
        </div>
    );
}
